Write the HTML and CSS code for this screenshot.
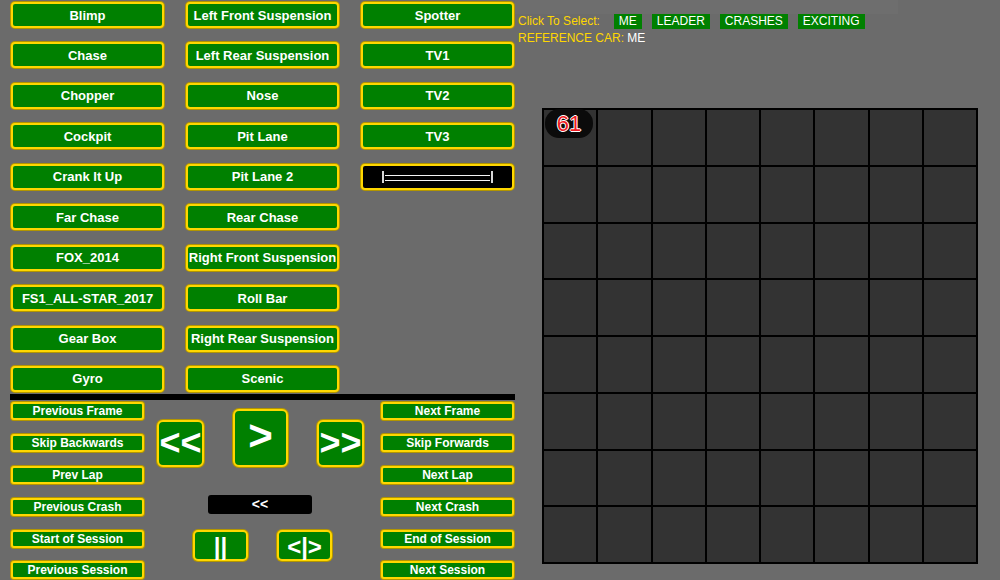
FILE: index.html
```html
<!DOCTYPE html>
<html>
<head>
<meta charset="utf-8">
<link rel="stylesheet" href="styles.css">
</head>
<body>
<div class="page">
  <div class="left">
    <div class="cams">
      <div class="col">
        <div class="btn">Blimp</div>
        <div class="btn">Chase</div>
        <div class="btn">Chopper</div>
        <div class="btn">Cockpit</div>
        <div class="btn">Crank It Up</div>
        <div class="btn">Far Chase</div>
        <div class="btn">FOX_2014</div>
        <div class="btn">FS1_ALL-STAR_2017</div>
        <div class="btn">Gear Box</div>
        <div class="btn">Gyro</div>
      </div>
      <div class="col">
        <div class="btn">Left Front Suspension</div>
        <div class="btn">Left Rear Suspension</div>
        <div class="btn">Nose</div>
        <div class="btn">Pit Lane</div>
        <div class="btn">Pit Lane 2</div>
        <div class="btn">Rear Chase</div>
        <div class="btn">Right Front Suspension</div>
        <div class="btn">Roll Bar</div>
        <div class="btn">Right Rear Suspension</div>
        <div class="btn">Scenic</div>
      </div>
      <div class="col">
        <div class="btn">Spotter</div>
        <div class="btn">TV1</div>
        <div class="btn">TV2</div>
        <div class="btn">TV3</div>
        <div class="btn slider"><span class="track"></span></div>
      </div>
    </div>
    <div class="divider"></div>
    <div class="controls">
      <div class="side">
        <div class="sbtn">Previous Frame</div>
        <div class="sbtn">Skip Backwards</div>
        <div class="sbtn">Prev Lap</div>
        <div class="sbtn">Previous Crash</div>
        <div class="sbtn">Start of Session</div>
        <div class="sbtn">Previous Session</div>
      </div>
      <div class="center">
        <div class="transport">
          <div class="ctl med">&lt;&lt;</div>
          <div class="ctl big">&gt;</div>
          <div class="ctl med">&gt;&gt;</div>
        </div>
        <div class="speed">&lt;&lt;</div>
        <div class="transport2">
          <div class="ctl small">||</div>
          <div class="ctl small">&lt;|&gt;</div>
        </div>
      </div>
      <div class="side">
        <div class="sbtn">Next Frame</div>
        <div class="sbtn">Skip Forwards</div>
        <div class="sbtn">Next Lap</div>
        <div class="sbtn">Next Crash</div>
        <div class="sbtn">End of Session</div>
        <div class="sbtn">Next Session</div>
      </div>
    </div>
  </div>
  <div class="right">
    <div class="strip"></div>
    <div class="select">
      <span class="label">Click To Select:</span>
      <span class="tag first">ME</span>
      <span class="tag">LEADER</span>
      <span class="tag">CRASHES</span>
      <span class="tag">EXCITING</span>
    </div>
    <div class="refcar"><span class="label">REFERENCE CAR:</span> <span class="val">ME</span></div>
    <div class="grid">
      <div class="cell"><span class="car">61</span></div>
      <div class="cell"></div><div class="cell"></div><div class="cell"></div><div class="cell"></div><div class="cell"></div><div class="cell"></div><div class="cell"></div>
      <div class="cell"></div><div class="cell"></div><div class="cell"></div><div class="cell"></div><div class="cell"></div><div class="cell"></div><div class="cell"></div><div class="cell"></div>
      <div class="cell"></div><div class="cell"></div><div class="cell"></div><div class="cell"></div><div class="cell"></div><div class="cell"></div><div class="cell"></div><div class="cell"></div>
      <div class="cell"></div><div class="cell"></div><div class="cell"></div><div class="cell"></div><div class="cell"></div><div class="cell"></div><div class="cell"></div><div class="cell"></div>
      <div class="cell"></div><div class="cell"></div><div class="cell"></div><div class="cell"></div><div class="cell"></div><div class="cell"></div><div class="cell"></div><div class="cell"></div>
      <div class="cell"></div><div class="cell"></div><div class="cell"></div><div class="cell"></div><div class="cell"></div><div class="cell"></div><div class="cell"></div><div class="cell"></div>
      <div class="cell"></div><div class="cell"></div><div class="cell"></div><div class="cell"></div><div class="cell"></div><div class="cell"></div><div class="cell"></div><div class="cell"></div>
      <div class="cell"></div><div class="cell"></div><div class="cell"></div><div class="cell"></div><div class="cell"></div><div class="cell"></div><div class="cell"></div><div class="cell"></div>
    </div>
  </div>
</div>
</body>
</html>
```

FILE: styles.css
```css
* { box-sizing: border-box; }
html, body { margin: 0; padding: 0; }
body {
  background: #6b6b6b;
  font-family: "Liberation Sans", Arial, sans-serif;
  width: 1000px;
  height: 580px;
  overflow: hidden;
}
.page { display: flex; }
.left { width: 515px; padding-left: 10px; }
.cams { display: flex; gap: 22px; padding: 2px 1px 0 1px; }
.col { display: flex; flex-direction: column; gap: 14.44px; width: 153px; }

.btn, .sbtn, .ctl {
  background: #008000;
  color: #fff;
  font-weight: bold;
  border: 2px solid #ffd700;
  box-shadow: 0 0 0 1px #b39600;
  display: flex;
  align-items: center;
  justify-content: center;
  white-space: nowrap;
}
.btn { height: 26px; border-radius: 4px; font-size: 13px; }
.btn.slider { background: #000; }
.track {
  display: block;
  width: 111px;
  height: 12px;
  border-left: 2px solid #d8d8d8;
  border-right: 2px solid #d8d8d8;
  position: relative;
}
.track::before {
  content: "";
  position: absolute;
  left: 1px; right: 1px; top: 4px;
  height: 4px;
  border-top: 1px solid #f4f4f4;
  border-bottom: 1px solid #f4f4f4;
}

.divider { height: 6px; background: #000; margin-top: 2px; width: 505px; }

.controls { display: flex; margin-top: 2px; padding: 0 1px; width: 505px; }
.side { display: flex; flex-direction: column; gap: 13.9px; width: 133px; }
.sbtn { height: 18px; border-radius: 3px; font-size: 12px; }
.center { width: 237px; padding-top: 7px; }
.transport { display: flex; justify-content: center; align-items: flex-end; gap: 29px; padding-right: 4px; }
.ctl { border-radius: 6px; }
.ctl.med { width: 47px; height: 47px; font-size: 36px; }
.ctl.big { width: 55px; height: 58px; font-size: 42px; padding-bottom: 4px; }
.ctl.small { width: 55px; height: 31px; font-size: 24px; border-radius: 5px; padding-top: 3px; }
.speed {
  margin: 28px 0 0 64px;
  width: 104px;
  height: 19px;
  background: #000;
  border-radius: 3px;
  color: #fff;
  font-weight: bold;
  font-size: 14px;
  line-height: 19px;
  text-align: center;
}
.transport2 { display: flex; justify-content: center; gap: 29px; margin-top: 16px; }

.right { width: 485px; padding-left: 3px; }
.strip { width: 383px; height: 14px; margin-left: -3px; background: #6e6e6e; }
.select { display: flex; align-items: center; height: 14.5px; font-size: 12px; }
.label { color: #ffd700; }
.tag {
  background: #008000;
  color: #fff;
  padding: 0 5px;
  line-height: 14.5px;
  margin-left: 10px;
}
.tag.first { margin-left: 14px; }
.refcar { font-size: 12px; line-height: 14px; margin-top: 2.5px; }
.val { color: #fff; }

.grid {
  margin: 63px 0 0 24px;
  width: 436px;
  height: 456px;
  background: #000;
  border: 2px solid #000;
  display: grid;
  grid-template-columns: repeat(8, 1fr);
  grid-template-rows: repeat(8, 1fr);
  gap: 2px;
}
.cell { background: #333; position: relative; }
.car {
  position: absolute;
  top: -1px;
  left: 1px;
  width: 48px;
  height: 29px;
  border-radius: 14px;
  background: #0b0b0b;
  color: #ee1c24;
  font-size: 22px;
  line-height: 29px;
  text-align: center;
  text-shadow: 1px 0 0 #fff, -1px 0 0 #fff, 0 1px 0 #fff, 0 -1px 0 #fff;
}
```
